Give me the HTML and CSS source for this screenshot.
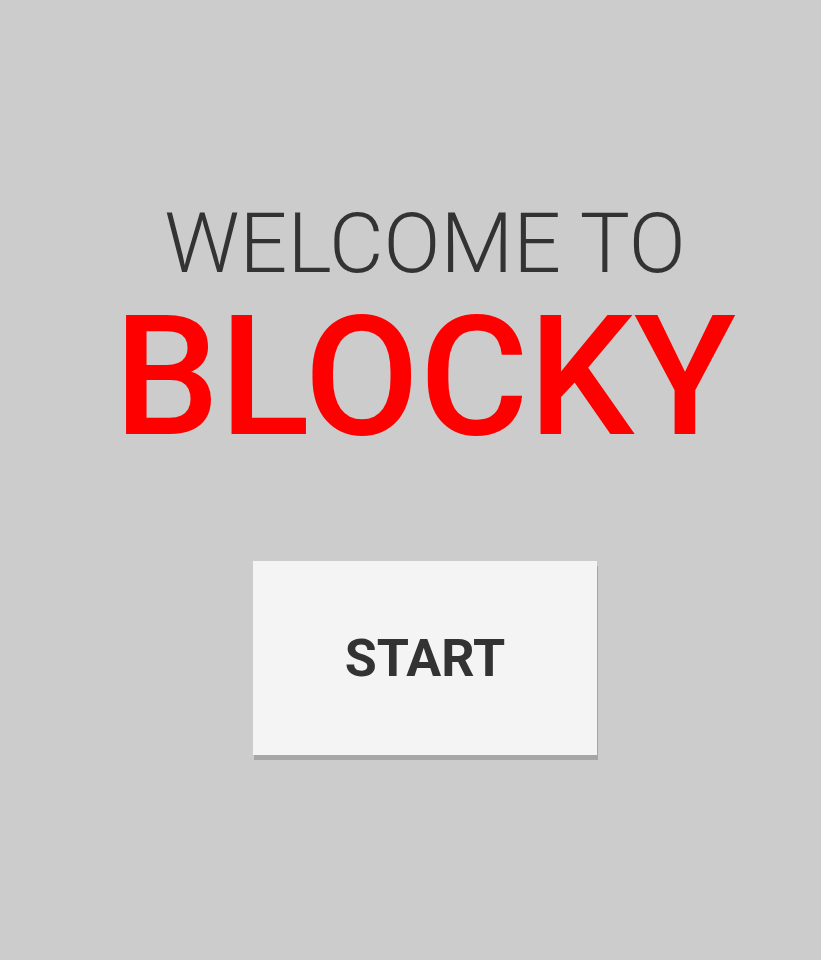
FILE: index.html
```html
<!DOCTYPE html>
<html>
<head>
<meta charset="utf-8">
<link rel="stylesheet" href="styles.css">
</head>
<body>
<main class="screen">
  <div class="welcome">WELCOME TO</div>
  <div class="title">BLOCKY</div>
  <button class="start">START</button>
</main>
</body>
</html>
```

FILE: styles.css
```css
html, body {
  margin: 0;
  padding: 0;
  background: #cccccc;
  height: 100%;
}
.screen {
  display: flex;
  flex-direction: column;
  align-items: center;
  padding-top: 202px;
  padding-left: 29px;
  font-family: Roboto, "Liberation Sans", sans-serif;
}
.welcome {
  font-size: 84px;
  line-height: 1;
  font-weight: 300;
  color: #333333;
}
.title {
  margin-top: 8px;
  font-size: 167px;
  line-height: 1;
  font-weight: 500;
  color: #ff0000;
}
.start {
  margin-top: 100px;
  width: 344px;
  height: 194px;
  border: none;
  border-radius: 0;
  background: #f4f4f4;
  box-shadow: 1px 5px 0 #a6a6a6;
  font-family: Roboto, "Liberation Sans", sans-serif;
  font-size: 52px;
  font-weight: 700;
  color: #333333;
  padding: 0;
}
```
